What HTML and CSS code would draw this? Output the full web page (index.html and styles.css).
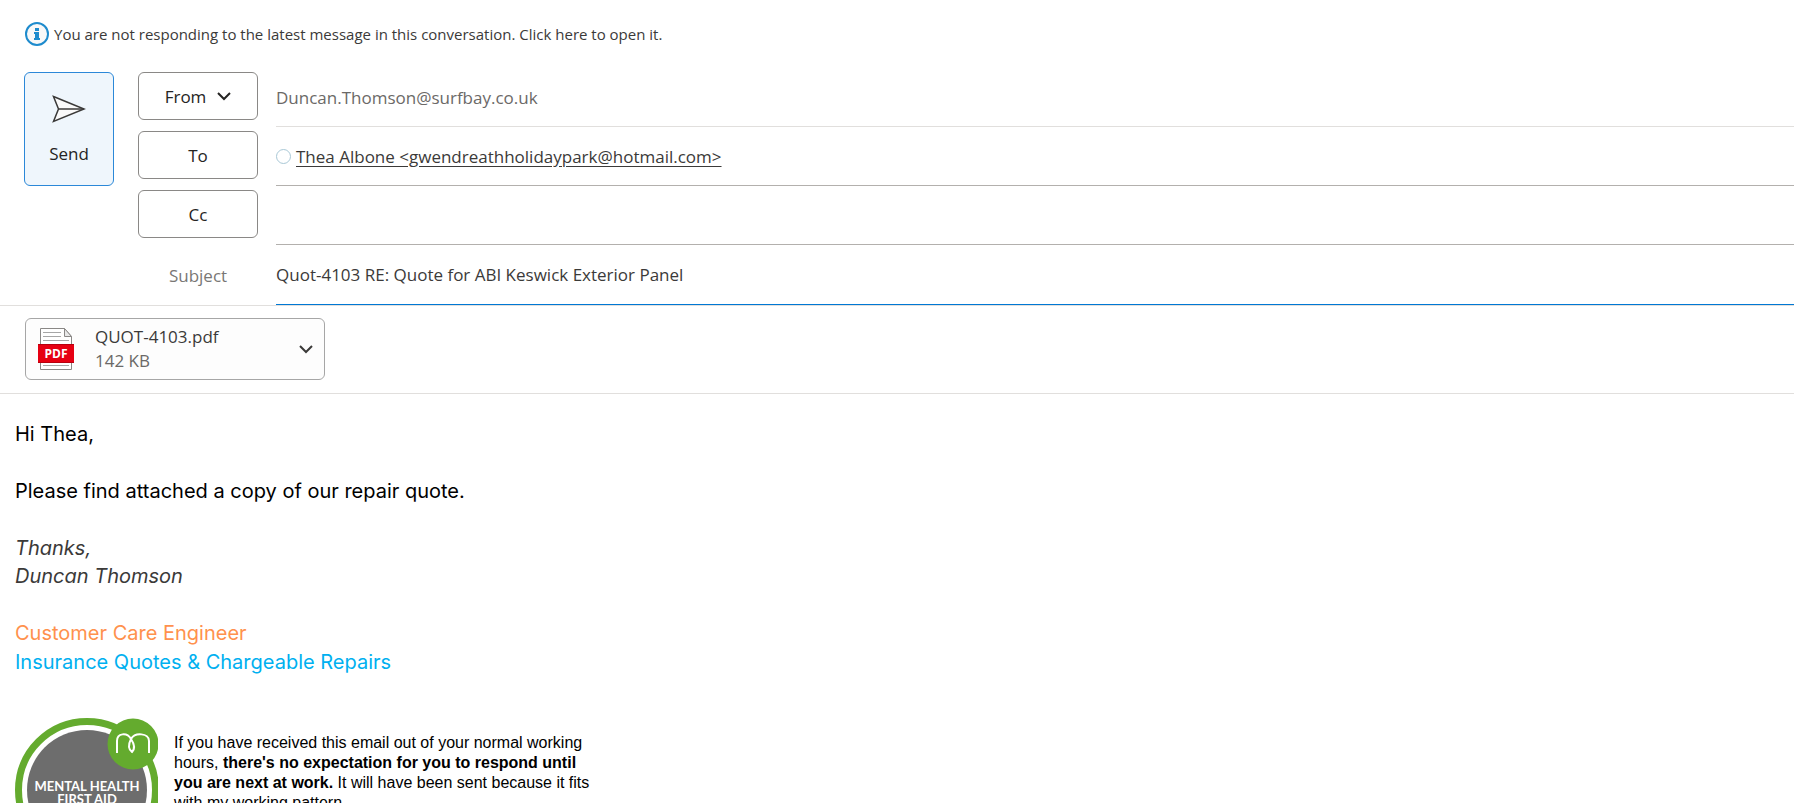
FILE: index.html
```html
<!DOCTYPE html>
<html lang="en">

<head>
    <meta charset="utf-8">
    <title>Quot-4103 RE: Quote for ABI Keswick Exterior Panel</title>
    <meta name="viewport" content="width=device-width, initial-scale=1.0">
    <link rel="stylesheet" href="styles.css">
</head>

<body>
    <button type="button" class="notice">
        <svg class="notice-icon" viewBox="0 0 24 24">
            <circle cx="12" cy="12" r="11" fill="#f8f8f8" stroke="#1e8bcd" stroke-width="2" />
            <path d="M10 6h4v3h-4zM10 10h4v6h1v2H9v-2h1v-4H9v-2z" fill="#1e8bcd" />
        </svg>
        You are not responding to the latest message in this conversation. Click here to open it.
    </button>

    <form class="header">
        <button type="button" class="send">
            <svg class="send-icon" viewBox="0 0 34 28">
                <path d="M1.5 1.5L32 14 1.5 26.5 6.5 14z" fill="#fafafa" stroke="#3b3a39" stroke-width="1.5" />
                <path d="M6.5 14H32" stroke="#3b3a39" stroke-width="1.5" />
            </svg>
            Send
        </button>
        <div class="fields">
            <div class="row">
                <button type="button" class="field-button">From
                    <svg class="chevron" viewBox="0 0 14 10">
                        <path d="M1 2l6 6 6-6" fill="none" stroke="#252423" stroke-width="2" />
                    </svg>
                </button>
                <div class="field light">Duncan.Thomson@surfbay.co.uk</div>
            </div>
            <div class="row">
                <button type="button" class="field-button">To</button>
                <div class="field">
                    <span class="presence"></span>
                    <a class="recipient" href="#">Thea Albone &lt;gwendreathholidaypark@hotmail.com&gt;</a>
                </div>
            </div>
            <div class="row">
                <button type="button" class="field-button">Cc</button>
                <input class="field" type="text" aria-label="Cc">
            </div>
            <div class="row">
                <label class="subject-label" for="subject">Subject</label>
                <input class="field active" type="text" id="subject"
                    value="Quot-4103 RE: Quote for ABI Keswick Exterior Panel">
            </div>
        </div>
    </form>

    <div class="attachments">
        <button type="button" class="attachment">
            <svg class="pdf-icon" viewBox="0 0 36 42">
                <path d="M2.5.5h24l7 8v33h-31z" fill="#fff" stroke="#8a8886" />
                <path d="M26.5.5v8h7z" fill="#e8e8e8" stroke="#8a8886" />
                <path d="M5 4.5h18M5 8.5h18M5 12.5h26M5 37.5h26" stroke="#a6a6a6" />
                <path d="M0 16h36v19H0z" fill="#e60012" />
                <path d="M0 34.5h36M0 16.5h36" stroke="#b8000e" />
                <text class="pdf-text" x="18" y="30" text-anchor="middle">PDF</text>
            </svg>
            <span class="file">
                <span class="file-name">QUOT-4103.pdf</span>
                <span class="file-size">142 KB</span>
            </span>
            <svg class="chevron" viewBox="0 0 14 10">
                <path d="M1 2l6 6 6-6" fill="none" stroke="#3b3a39" stroke-width="2" />
            </svg>
        </button>
    </div>

    <div class="message">
        <p>Hi Thea,</p>
        <p>Please find attached a copy of our repair quote.</p>
        <p class="sign-off">Thanks,<br>Duncan Thomson</p>
        <p class="role">Customer Care Engineer</p>
        <p class="team">Insurance Quotes &amp; Chargeable Repairs</p>

        <div class="signature">
            <svg class="badge" viewBox="0 0 143 143">
                <circle cx="72" cy="72" r="68.5" fill="#fff" stroke="#64ab2e" stroke-width="7" />
                <circle cx="72" cy="72" r="60" fill="#6d6d6d" />
                <circle cx="118" cy="26" r="25.5" fill="#64ab2e" />
                <path d="M102 35V23c0-8 10-9 14-2 4 6 4 10 1 13-4-3-4-7-1-13 4-7 18-6 18 2v12"
                    fill="none" stroke="#fff" stroke-width="2" />
                <text class="badge-text" x="72" y="73" text-anchor="middle">MENTAL HEALTH</text>
                <text class="badge-text" x="72" y="86" text-anchor="middle">FIRST AID</text>
            </svg>
            <p class="hours-note">If you have received this email out of your normal working hours, <strong>there's no
                expectation for you to respond until you are next at work.</strong> It will have been sent because it
                fits with my working pattern.</p>
        </div>
    </div>
</body>

</html>
```

FILE: styles.css
```css
body {
    font-family: "Open Sans", sans-serif;
    font-size: 17px;
    color: #3b3a39;
    background-color: #fff;
    margin: 0;
    height: 100vh;
    overflow: hidden;
}

button,
input {
    font: inherit;
    color: inherit;
    box-sizing: border-box;
}

button {
    cursor: pointer;
}

.notice {
    display: flex;
    align-items: center;
    gap: 5px;
    width: 100%;
    padding: 22px 25px;
    border: none;
    background: none;
    font-size: 15px;
    line-height: 24px;
    text-align: left;
}

.notice-icon {
    width: 24px;
    height: 24px;
}

.header {
    display: flex;
    align-items: flex-start;
    gap: 24px;
    padding-left: 24px;
    border-bottom: 1px solid #e1dfdd;
}

.send {
    display: flex;
    flex-direction: column;
    align-items: center;
    gap: 19px;
    width: 90px;
    height: 114px;
    margin-top: 4px;
    padding: 22px 0 0;
    border: 1px solid #2b88d8;
    border-radius: 6px;
    background-color: #eff6fc;
    color: #252423;
    line-height: 24px;
}

.send-icon {
    width: 34px;
    height: 28px;
}

.fields {
    flex: 1;
}

.row {
    display: grid;
    grid-template-columns: 120px 1fr;
    gap: 18px;
}

.field-button {
    display: flex;
    align-items: center;
    justify-content: center;
    gap: 11px;
    height: 48px;
    margin: 4px 0 7px;
    border: 1px solid #8a8886;
    border-radius: 6px;
    background-color: #fff;
    color: #252423;
}

.chevron {
    width: 14px;
    height: 10px;
}

.field {
    display: flex;
    align-items: center;
    gap: 5px;
    min-width: 0;
    padding: 0;
    border: none;
    border-bottom: 1px solid #b3b0ad;
    border-radius: 0;
    background: none;
    outline: none;
}

.field.light {
    border-bottom-color: #e1dfdd;
    color: #6b6967;
}

.field.active {
    height: 60px;
    border-bottom-color: #0078d4;
}

.presence {
    width: 13px;
    height: 13px;
    border: 1px solid #a9c8d6;
    border-radius: 50%;
}

.recipient {
    color: inherit;
    text-underline-offset: 3px;
}

.subject-label {
    align-self: center;
    text-align: center;
    color: #797775;
}

.attachments {
    padding: 12px 25px 13px;
    border-bottom: 1px solid #e1dfdd;
}

.attachment {
    display: flex;
    align-items: center;
    width: 300px;
    height: 62px;
    padding: 0 11px 0 12px;
    border: 1px solid #a6a6a6;
    border-radius: 6px;
    background-color: #fdfdfd;
    text-align: left;
}

.pdf-icon {
    width: 36px;
    height: 42px;
}

.pdf-text {
    font-size: 12px;
    font-weight: bold;
    fill: #fff;
}

.file {
    flex: 1;
    margin-left: 21px;
    line-height: 24px;
}

.file-name,
.file-size {
    display: block;
}

.file-size {
    color: #6b6967;
}

.message {
    padding: 26px 15px;
    font-family: Inter, sans-serif;
    font-size: 20px;
    line-height: 28px;
    color: #000;
}

.message p {
    margin: 0 0 29px;
}

.message .sign-off {
    font-style: italic;
    color: #3b3a39;
}

.message .role {
    margin-bottom: 1px;
    color: #ff914d;
}

.team {
    color: #00b0f0;
}

.signature {
    display: flex;
    align-items: flex-start;
    gap: 16px;
    margin-top: 42px;
}

.badge {
    flex: none;
    width: 143px;
    height: 143px;
}

.badge-text {
    font-family: Lato, sans-serif;
    font-size: 13px;
    font-weight: bold;
    fill: #fff;
}

.signature .hours-note {
    max-width: 420px;
    margin: 15px 0 0;
    font-family: "Liberation Sans", Arial, sans-serif;
    font-size: 16px;
    line-height: 20px;
}
```
